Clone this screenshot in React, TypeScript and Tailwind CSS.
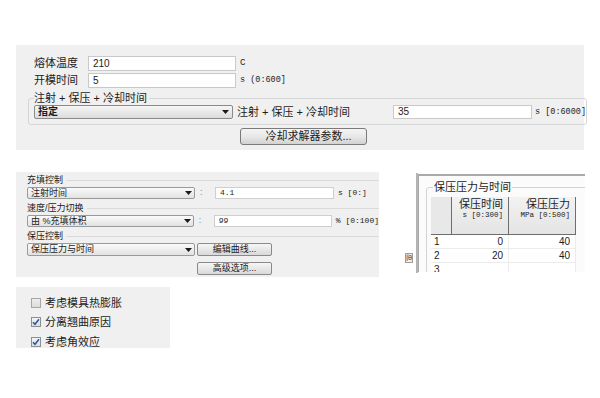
import React from 'react';

const Arrow = () => (
  <svg width="7" height="4" viewBox="0 0 7 4">
    <path d="M0 0h7L3.5 4z" fill="#1a1a1a" />
  </svg>
);

const Check = () => (
  <svg width="8" height="8" viewBox="0 0 8 8">
    <path d="M1 4.2l2 2.1L7 1.2" stroke="#2b5aa8" strokeWidth="1.6" fill="none" />
  </svg>
);

const App: React.FC = () => {
  return (
    <div className="w-[600px] h-[398px] bg-white text-[#1c1c1c] font-['Liberation_Sans','Noto_Sans_CJK_SC',sans-serif] pt-[45px] pl-[16px] overflow-hidden">
      {/* cooling / time settings */}
      <div className="w-[568px] h-[105px] bg-[#f0f0f0] pt-[11px] pl-[18px]">
        <div className="flex items-center h-[15px]">
          <span className="w-[54px] text-[11px] leading-[15px]">熔体温度</span>
          <div className="w-[148px] h-[15px] bg-white border border-[#c9c9c9] text-[10px] leading-[13px] pl-[4px]">210</div>
          <span className="ml-[4px] text-[9px] font-['Liberation_Mono',monospace]">C</span>
        </div>
        <div className="flex items-center h-[15px] mt-[2px]">
          <span className="w-[54px] text-[11px] leading-[15px]">开模时间</span>
          <div className="w-[148px] h-[15px] bg-white border border-[#c9c9c9] text-[10px] leading-[13px] pl-[4px]">5</div>
          <span className="ml-[4px] text-[8.5px] font-['Liberation_Mono',monospace] whitespace-nowrap">s (0:600]</span>
        </div>
        <fieldset className="ml-[-6px] mt-[3px] w-[556px] border border-[#d6d6d6] rounded-[3px] pl-[5px] pb-[5px]">
          <legend className="text-[11px] leading-[14px] pr-[2px]">注射 + 保压 + 冷却时间</legend>
          <div className="flex items-center h-[14px]">
            <div className="w-[199px] h-[14px] flex items-center justify-between border border-[#8a8a8a] rounded-[2px] bg-gradient-to-b from-[#f6f6f6] to-[#dcdcdc] pl-[3px] pr-[3px]">
              <span className="text-[10px] leading-[12px] font-bold">指定</span>
              <Arrow />
            </div>
            <span className="ml-[4px] w-[152px] text-[11px] leading-[14px] whitespace-nowrap">注射 + 保压 + 冷却时间</span>
            <div className="ml-[4px] w-[139px] h-[14px] bg-white border border-[#c9c9c9] text-[10px] leading-[12px] pl-[4px]">35</div>
            <span className="ml-[3px] text-[8.5px] font-['Liberation_Mono',monospace] whitespace-nowrap">s [0:6000]</span>
          </div>
        </fieldset>
        <button className="block ml-[206px] mt-[3px] w-[127px] h-[17px] border border-[#7a7a7a] rounded-[3px] bg-gradient-to-b from-[#f4f4f4] via-[#e8e8e8] to-[#d2d2d2] text-[11px] leading-[15px] pl-[10px]">
          冷却求解器参数...
        </button>
      </div>

      <div className="flex mt-[22px]">
        {/* fill / pack controls */}
        <div className="w-[363px] h-[105px] bg-[#f0f0f0] pt-[3px] pl-[11px]">
          <div className="flex items-center h-[10px]">
            <span className="text-[9px] leading-[10px] pr-[3px]">充填控制</span>
            <div className="flex-1 border-t border-[#dadada]" />
          </div>
          <div className="flex items-center h-[12px] mt-[2px]">
            <div className="w-[168px] h-[12px] flex items-center justify-between border border-[#9a9a9a] rounded-[2px] bg-gradient-to-b from-[#fafafa] to-[#e2e2e2] pl-[3px] pr-[2px]">
              <span className="text-[9px] leading-[10px]">注射时间</span>
              <Arrow />
            </div>
            <span className="w-[20px] pl-[5px] text-[9px] text-[#8a8a8a]">:</span>
            <div className="w-[119px] h-[12px] bg-white border border-[#cfcfcf] text-[8px] leading-[10px] pl-[4px] font-['Liberation_Mono',monospace]">4.1</div>
            <span className="ml-[4px] text-[8px] font-['Liberation_Mono',monospace] whitespace-nowrap">s [0:]</span>
          </div>
          <div className="flex items-center h-[10px] mt-[4px]">
            <span className="text-[9px] leading-[10px] pr-[3px]">速度/压力切换</span>
            <div className="flex-1 border-t border-[#dadada]" />
          </div>
          <div className="flex items-center h-[12px] mt-[2px]">
            <div className="w-[168px] h-[12px] flex items-center justify-between border border-[#9a9a9a] rounded-[2px] bg-gradient-to-b from-[#fafafa] to-[#e2e2e2] pl-[3px] pr-[2px]">
              <span className="text-[9px] leading-[10px] whitespace-nowrap">由 %充填体积</span>
              <Arrow />
            </div>
            <span className="w-[20px] pl-[5px] text-[9px] text-[#8a8a8a]">:</span>
            <div className="w-[119px] h-[12px] bg-white border border-[#cfcfcf] text-[8px] leading-[10px] pl-[4px] font-['Liberation_Mono',monospace]">99</div>
            <span className="ml-[4px] text-[8px] font-['Liberation_Mono',monospace] whitespace-nowrap">% [0:100]</span>
          </div>
          <div className="flex items-center h-[10px] mt-[4px]">
            <span className="text-[9px] leading-[10px] pr-[3px]">保压控制</span>
            <div className="flex-1 border-t border-[#dadada]" />
          </div>
          <div className="flex items-center h-[13px] mt-[2px]">
            <div className="w-[168px] h-[13px] flex items-center justify-between border border-[#9a9a9a] rounded-[2px] bg-gradient-to-b from-[#fafafa] to-[#e2e2e2] pl-[3px] pr-[2px]">
              <span className="text-[9px] leading-[11px]">保压压力与时间</span>
              <Arrow />
            </div>
            <button className="ml-[2px] w-[75px] h-[13px] border border-[#8a8a8a] rounded-[2px] bg-gradient-to-b from-[#f6f6f6] to-[#d9d9d9] text-[9px] leading-[11px]">编辑曲线...</button>
          </div>
          <button className="block ml-[170px] mt-[6px] w-[75px] h-[13px] border border-[#8a8a8a] rounded-[2px] bg-gradient-to-b from-[#f6f6f6] to-[#d9d9d9] text-[9px] leading-[11px]">高级选项...</button>
        </div>

        {/* cut-off neighbour + profile table */}
        <div className="ml-[26px] w-[13px] h-[100px] mt-[1px] flex flex-col justify-end border-r-2 border-[#b4b4b4] pb-[10px]">
          <div className="w-[8px] h-[10px] overflow-hidden border border-[#9c9c9c] bg-[#f0f0f0] text-[8px] leading-[8px] text-right">间</div>
        </div>
        <div className="w-[167px] h-[98px] mt-[2px] border-t-2 border-l border-[#a9a9a9] bg-[#fbfbfb] overflow-hidden">
          <fieldset className="ml-[7px] mt-[5px] w-[200px] h-[120px] border border-[#d4d4d4] rounded-[3px] pl-[4px]">
            <legend className="ml-[2px] px-[1px] text-[11px] leading-[12px]">保压压力与时间</legend>
            <div className="mt-[4px] grid grid-cols-[21px_57px_67px]">
              <div className="h-[38px] bg-[#e8e8e8] border-r border-b border-[#6e6e6e]" />
              <div className="h-[38px] bg-gradient-to-b from-[#f2f2f2] to-[#e4e4e4] border-r border-b border-[#6e6e6e] pr-[5px] pt-[1px] text-right">
                <div className="text-[11px] leading-[12px]">保压时间</div>
                <div className="text-[7.5px] leading-[11px] font-['Liberation_Mono',monospace] whitespace-nowrap">s [0:300]</div>
              </div>
              <div className="h-[38px] bg-gradient-to-b from-[#f2f2f2] to-[#e4e4e4] border-r border-b border-[#6e6e6e] pr-[5px] pt-[1px] text-right">
                <div className="text-[11px] leading-[12px]">保压压力</div>
                <div className="text-[7.5px] leading-[11px] font-['Liberation_Mono',monospace] whitespace-nowrap">MPa [0:500]</div>
              </div>
              {[['1', '0', '40'], ['2', '20', '40'], ['3', '', '']].map((r) => (
                <React.Fragment key={r[0]}>
                  <div className="h-[14px] bg-white border-b border-[#ececec] pl-[3px] text-[10px] leading-[14px]">{r[0]}</div>
                  <div className="h-[14px] bg-white border-b border-r border-[#ececec] pr-[5px] text-right text-[10px] leading-[14px]">{r[1]}</div>
                  <div className="h-[14px] bg-white border-b border-r border-[#ececec] pr-[5px] text-right text-[10px] leading-[14px]">{r[2]}</div>
                </React.Fragment>
              ))}
            </div>
          </fieldset>
        </div>
      </div>

      {/* options */}
      <div className="mt-[10px] w-[154px] h-[61px] bg-[#f0f0f0] pt-[6px] pl-[15px]">
        {[
          ['考虑模具热膨胀', false],
          ['分离翘曲原因', true],
          ['考虑角效应', true],
        ].map(([label, on]) => (
          <div key={label as string} className="flex items-center h-[19.5px]">
            <div
              className={
                on
                  ? 'w-[10px] h-[10px] border border-[#8f8f8f] bg-gradient-to-b from-[#f4f4f4] to-[#dedede] flex items-center justify-center'
                  : 'w-[10px] h-[10px] border border-[#a7a7a7] bg-gradient-to-b from-[#ececec] to-[#dcdcdc]'
              }
            >
              {on ? <Check /> : null}
            </div>
            <span className="ml-[4px] text-[11px] leading-[14px]">{label}</span>
          </div>
        ))}
      </div>
    </div>
  );
};

export default App;
